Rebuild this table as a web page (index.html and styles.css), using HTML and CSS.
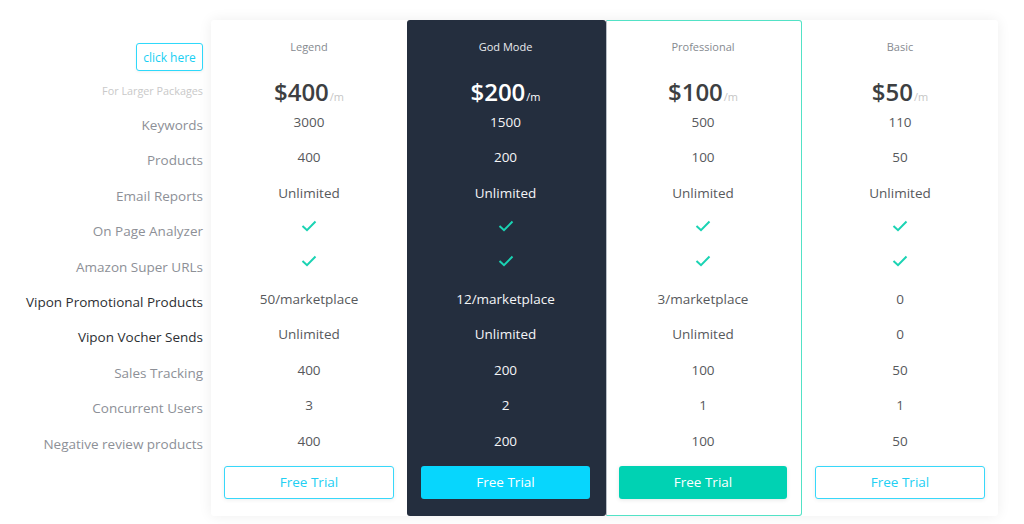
FILE: index.html
```html
<!DOCTYPE html>
<html>
<head>
<meta charset="utf-8">
<link rel="stylesheet" href="styles.css">
</head>
<body>
<div class="page">
  <div class="labels">
    <button class="click-btn">click here</button>
    <div class="larger">For Larger Packages</div>
    <div class="label">Keywords</div>
    <div class="label">Products</div>
    <div class="label">Email Reports</div>
    <div class="label">On Page Analyzer</div>
    <div class="label">Amazon Super URLs</div>
    <div class="label dark">Vipon Promotional Products</div>
    <div class="label dark">Vipon Vocher Sends</div>
    <div class="label">Sales Tracking</div>
    <div class="label">Concurrent Users</div>
    <div class="label">Negative review products</div>
  </div>
  <div class="card">
    <div class="col">
      <div class="name">Legend</div>
      <div class="price">$400<span class="per">/m</span></div>
      <div class="val">3000</div>
      <div class="val">400</div>
      <div class="val">Unlimited</div>
      <div class="val chk"><svg viewBox="0 0 16 12" width="16" height="12"><polyline points="1.5,6 6,10.2 14.5,1.5" fill="none" stroke="#1ad3b3" stroke-width="2"/></svg></div>
      <div class="val chk"><svg viewBox="0 0 16 12" width="16" height="12"><polyline points="1.5,6 6,10.2 14.5,1.5" fill="none" stroke="#1ad3b3" stroke-width="2"/></svg></div>
      <div class="val">50/marketplace</div>
      <div class="val">Unlimited</div>
      <div class="val">400</div>
      <div class="val">3</div>
      <div class="val">400</div>
      <button class="trial outline">Free Trial</button>
    </div>
    <div class="col god">
      <div class="name">God Mode</div>
      <div class="price">$200<span class="per">/m</span></div>
      <div class="val">1500</div>
      <div class="val">200</div>
      <div class="val">Unlimited</div>
      <div class="val chk"><svg viewBox="0 0 16 12" width="16" height="12"><polyline points="1.5,6 6,10.2 14.5,1.5" fill="none" stroke="#1ad3b3" stroke-width="2"/></svg></div>
      <div class="val chk"><svg viewBox="0 0 16 12" width="16" height="12"><polyline points="1.5,6 6,10.2 14.5,1.5" fill="none" stroke="#1ad3b3" stroke-width="2"/></svg></div>
      <div class="val">12/marketplace</div>
      <div class="val">Unlimited</div>
      <div class="val">200</div>
      <div class="val">2</div>
      <div class="val">200</div>
      <button class="trial cyan">Free Trial</button>
    </div>
    <div class="col pro">
      <div class="name">Professional</div>
      <div class="price">$100<span class="per">/m</span></div>
      <div class="val">500</div>
      <div class="val">100</div>
      <div class="val">Unlimited</div>
      <div class="val chk"><svg viewBox="0 0 16 12" width="16" height="12"><polyline points="1.5,6 6,10.2 14.5,1.5" fill="none" stroke="#1ad3b3" stroke-width="2"/></svg></div>
      <div class="val chk"><svg viewBox="0 0 16 12" width="16" height="12"><polyline points="1.5,6 6,10.2 14.5,1.5" fill="none" stroke="#1ad3b3" stroke-width="2"/></svg></div>
      <div class="val">3/marketplace</div>
      <div class="val">Unlimited</div>
      <div class="val">100</div>
      <div class="val">1</div>
      <div class="val">100</div>
      <button class="trial teal">Free Trial</button>
    </div>
    <div class="col">
      <div class="name">Basic</div>
      <div class="price">$50<span class="per">/m</span></div>
      <div class="val">110</div>
      <div class="val">50</div>
      <div class="val">Unlimited</div>
      <div class="val chk"><svg viewBox="0 0 16 12" width="16" height="12"><polyline points="1.5,6 6,10.2 14.5,1.5" fill="none" stroke="#1ad3b3" stroke-width="2"/></svg></div>
      <div class="val chk"><svg viewBox="0 0 16 12" width="16" height="12"><polyline points="1.5,6 6,10.2 14.5,1.5" fill="none" stroke="#1ad3b3" stroke-width="2"/></svg></div>
      <div class="val">0</div>
      <div class="val">0</div>
      <div class="val">50</div>
      <div class="val">1</div>
      <div class="val">50</div>
      <button class="trial outline">Free Trial</button>
    </div>
  </div>
</div>
</body>
</html>
```

FILE: styles.css
```css
* { box-sizing: border-box; }
html, body { margin: 0; padding: 0; background: #ffffff; }
body {
  font-family: "Open Sans", "Noto Sans", sans-serif;
  width: 1024px;
  height: 524px;
  overflow: hidden;
}
.page {
  display: flex;
  align-items: flex-start;
}
.labels {
  width: 203px;
  display: flex;
  flex-direction: column;
  align-items: flex-end;
  padding-top: 43px;
}
.click-btn {
  height: 28px;
  width: 67px;
  padding: 0;
  border: 1px solid #2fd9fb;
  border-radius: 3px;
  background: #fff;
  color: #19cff3;
  font-family: inherit;
  font-size: 12px;
  box-shadow: 0 1px 3px rgba(0,0,0,0.06);
}
.larger {
  margin-top: 13px;
  font-size: 10.8px;
  line-height: 14px;
  color: #c9c9c9;
}
.label {
  height: 35.4px;
  line-height: 35.4px;
  font-size: 13.5px;
  color: #8d9097;
  white-space: nowrap;
}
.labels .larger + .label { margin-top: 10px; }
.label.dark { color: #2d2f33; }
.card {
  margin-left: 8px;
  margin-top: 20px;
  display: grid;
  grid-template-columns: 196px 199px 196px 196px;
  background: #fff;
  border-radius: 3px;
  box-shadow: 0 0 14px rgba(0,0,0,0.07);
}
.col {
  display: flex;
  flex-direction: column;
  align-items: stretch;
  text-align: center;
  padding: 20px 13px 17px;
  height: 496px;
}
.name {
  font-size: 11px;
  line-height: 14px;
  color: #868a90;
}
.price {
  margin-top: 25px;
  height: 26px;
  line-height: 26px;
  font-size: 24px;
  font-weight: 600;
  color: #3d3f42;
}
.per {
  font-size: 11px;
  font-weight: 400;
  color: #c6c6c6;
  margin-left: 1px;
}
.val {
  height: 35.4px;
  line-height: 35.4px;
  font-size: 13.5px;
  color: #57595c;
  white-space: nowrap;
}
.val.chk {
  display: flex;
  align-items: center;
  justify-content: center;
  padding-bottom: 6px;
}
.trial {
  margin-top: 7px;
  height: 33px;
  border-radius: 3px;
  font-family: inherit;
  font-size: 13.5px;
  padding: 0;
  cursor: pointer;
}
.trial.outline {
  background: #fff;
  border: 1px solid #38d8fa;
  color: #22cff3;
  box-shadow: 0 1px 4px rgba(0,0,0,0.07);
}
.trial.cyan {
  background: #07d6fd;
  border: none;
  color: #fff;
}
.trial.teal {
  background: #00d2b3;
  border: none;
  color: #fff;
  box-shadow: 0 1px 4px rgba(0,0,0,0.1);
}
.god {
  background: #242e3e;
  border-radius: 3px;
  padding-left: 14px;
  padding-right: 16px;
}
.god .name { color: #e9ebee; }
.god .price { color: #ffffff; }
.god .per { color: #ffffff; }
.god .val { color: #f4f5f7; }
.pro {
  border: 1px solid #52e2c6;
  border-left-color: #b8bec6;
  border-radius: 0 3px 3px 0;
  padding-left: 12px;
  padding-right: 14px;
  padding-top: 19px;
  padding-bottom: 16px;
}
```
